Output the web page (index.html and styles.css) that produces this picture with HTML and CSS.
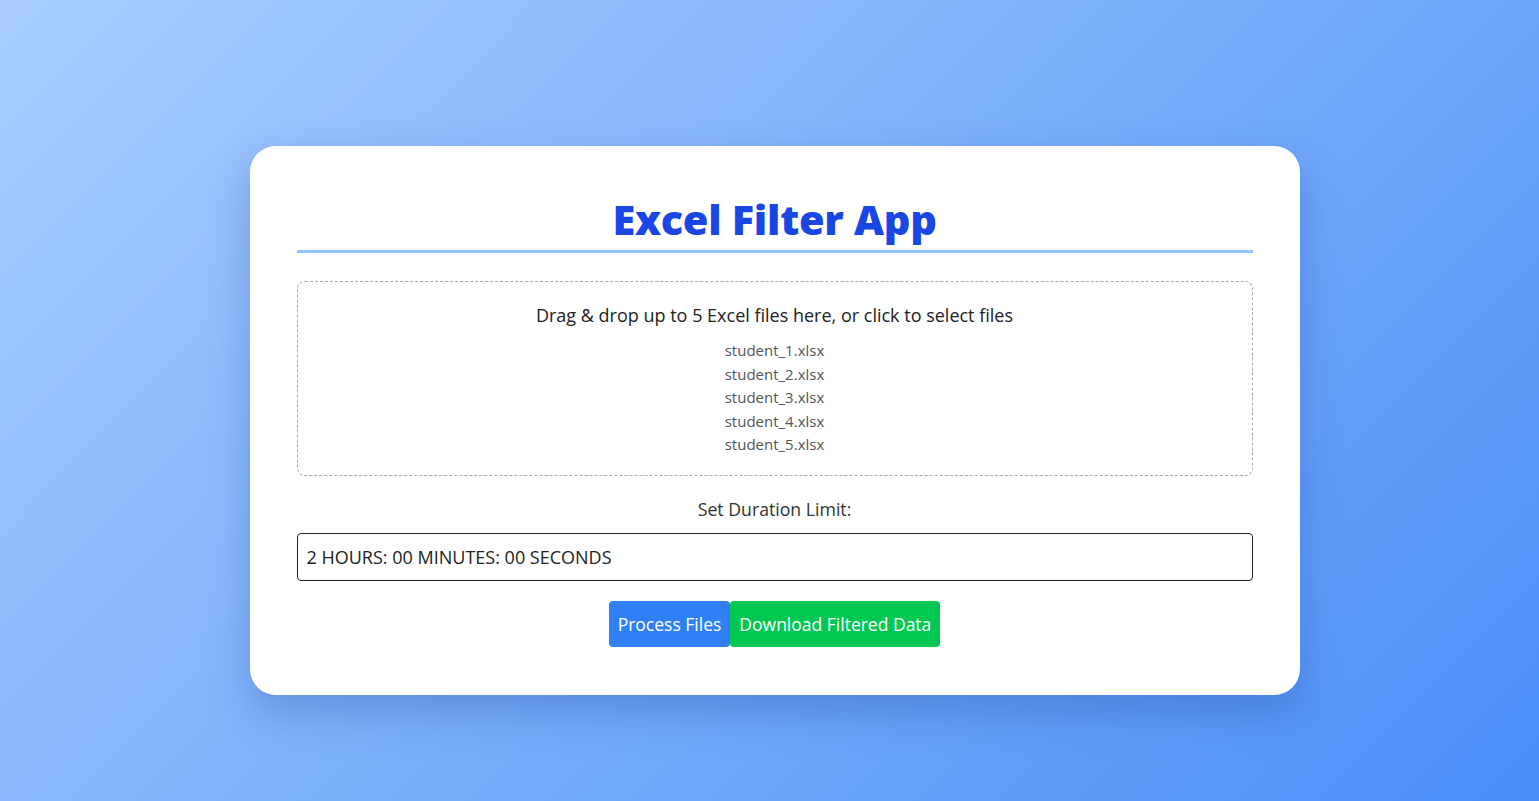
FILE: index.html
```html
<!DOCTYPE html>
<html lang="en">
<head>
<meta charset="utf-8">
<title>Excel Filter App</title>
<link rel="stylesheet" href="styles.css">
</head>
<body>
<main class="page">
  <section class="card">
    <h1 class="title">Excel Filter App</h1>
    <div class="dropzone">
      <p class="drop-text">Drag &amp; drop up to 5 Excel files here, or click to select files</p>
      <ul class="file-list">
        <li>student_1.xlsx</li>
        <li>student_2.xlsx</li>
        <li>student_3.xlsx</li>
        <li>student_4.xlsx</li>
        <li>student_5.xlsx</li>
      </ul>
    </div>
    <label class="label" for="duration">Set Duration Limit:</label>
    <input class="input" id="duration" type="text" value="2 HOURS: 00 MINUTES: 00 SECONDS">
    <div class="actions">
      <button class="btn btn-blue">Process Files</button>
      <button class="btn btn-green">Download Filtered Data</button>
    </div>
  </section>
</main>
</body>
</html>
```
FILE: styles.css
```css
* { box-sizing: border-box; }
html, body { margin: 0; height: 100%; }
body {
  font-family: "Open Sans", "Noto Sans", sans-serif;
  background: linear-gradient(135deg, #a9cdfe 0%, #7fb2fb 45%, #4a8ef8 100%);
  color: #222;
  overflow: hidden;
}
.page {
  display: flex;
  justify-content: center;
  align-items: flex-start;
  padding: 146px 0 0 10px;
  min-height: 100vh;
}
.card {
  width: 1050px;
  background: #fff;
  border-radius: 26px;
  padding: 48px 47px 48px;
  box-shadow: 0 18px 40px rgba(40, 80, 170, 0.35);
  display: flex;
  flex-direction: column;
}
.title {
  margin: 0;
  text-align: center;
  font-family: "Open Sans", sans-serif;
  font-weight: 800;
  font-size: 41.5px;
  line-height: 50px;
  color: #1a46e5;
  padding-bottom: 6px;
  border-bottom: 3px solid #93c5fd;
  letter-spacing: -0.3px;
}
.dropzone {
  margin-top: 28px;
  border: 1px dashed #a8a8a8;
  border-radius: 8px;
  padding: 20px 20px 18px;
  text-align: center;
}
.drop-text {
  margin: 0;
  font-size: 18px;
  line-height: 27px;
  color: #222;
}
.file-list {
  list-style: none;
  margin: 10px 0 0;
  padding: 0;
  font-size: 15px;
  line-height: 23.5px;
  color: #555;
}
.label {
  display: block;
  text-align: center;
  margin-top: 21px;
  font-size: 17.7px;
  line-height: 24px;
  color: #333;
}
.input {
  margin-top: 12px;
  width: 100%;
  height: 48px;
  border: 1.5px solid #222;
  border-radius: 4px;
  padding: 0 9px;
  font-family: "Open Sans", "Noto Sans", sans-serif;
  font-size: 18px;
  color: #222;
  background: #fff;
}
.actions {
  margin-top: 20px;
  display: flex;
  justify-content: center;
}
.btn {
  height: 46px;
  border: none;
  border-radius: 4px;
  padding: 0 9px;
  font-family: "Open Sans", "Noto Sans", sans-serif;
  font-size: 17.5px;
  color: #fff;
  cursor: pointer;
}
.btn-blue { background: #2f80f7; }
.btn-green { background: #00c853; }
```
